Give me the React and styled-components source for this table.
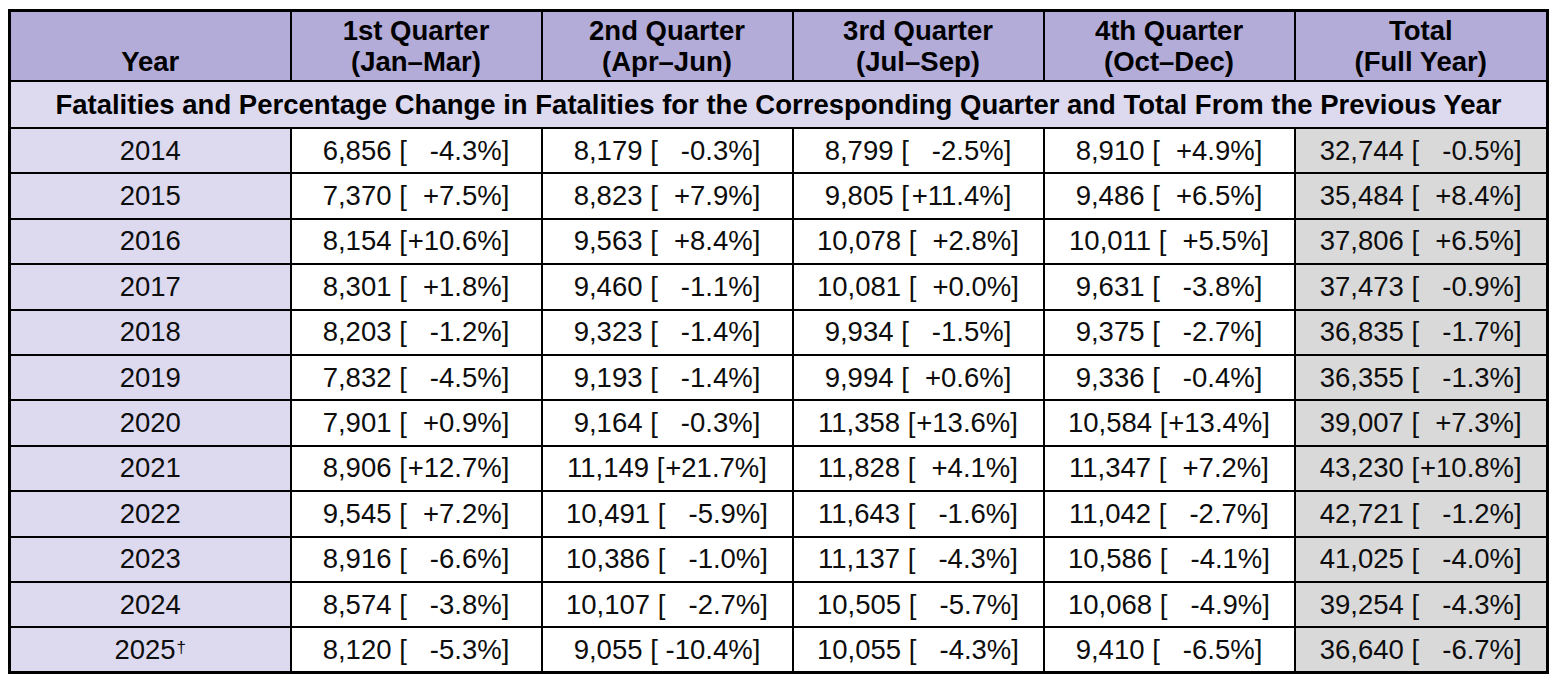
import React from 'react';
import styled, { createGlobalStyle } from 'styled-components';

const Global = createGlobalStyle`
  html, body { margin: 0; padding: 0; background: #fff; }
  body { font-family: "Liberation Sans", Arial, sans-serif; color: #000; }
`;

const Page = styled.div`
  width: 1556px;
  height: 682px;
  box-sizing: border-box;
  padding: 0 0 0 8px;
  overflow: hidden;
  font-family: "Liberation Sans", Arial, sans-serif;
`;

const Caption = styled.div`
  height: 9px;
  overflow: hidden;
  padding-left: 108px;
  font-size: 27.5px;
  font-weight: 700;
  line-height: 30px;
  color: #333;
  & > span {
    display: block;
    margin-top: -30.5px;
  }
`;

const Table = styled.table`
  border-collapse: collapse;
  table-layout: fixed;
  width: 1540px;
  border: 3px solid #000;
  font-family: "Liberation Sans", Arial, sans-serif;
`;

const Col = styled.col`
  width: ${(p) => p.$w}px;
`;

const Th = styled.th`
  font-family: "Liberation Sans", Arial, sans-serif;
  background: #b3acd9;
  border: 2px solid #000;
  font-size: 27.5px;
  font-weight: 700;
  line-height: 31px;
  vertical-align: bottom;
  text-align: center;
  padding: 3px 0 3px;
  height: 64px;
  box-sizing: border-box;
  white-space: nowrap;
`;

const SubHead = styled.td`
  font-family: "Liberation Sans", Arial, sans-serif;
  background: #dddaf0;
  border: 2px solid #000;
  font-size: 27.5px;
  font-weight: 700;
  text-align: center;
  height: 45px;
  padding: 0;
  white-space: nowrap;
`;

const bg = { year: '#dddaf0', total: '#d9d9d9', plain: '#fff' };

const Td = styled.td`
  font-family: "Liberation Sans", Arial, sans-serif;
  background: ${(p) => bg[p.$kind || 'plain']};
  border: 2px solid #000;
  font-size: 27.5px;
  text-align: center;
  height: 45.4px;
  padding: 0;
  white-space: nowrap;
  color: #0d0d0d;
  line-height: 30px;
  box-sizing: border-box;
`;

const Pct = styled.span`
  display: inline-block;
  min-width: 3.45em;
  text-align: right;
`;

const Dagger = styled.sup`
  font-size: 0.62em;
  vertical-align: top;
  position: relative;
  top: -2px;
  margin-left: 1px;
`;

const heads = [
  ['1st Quarter', '(Jan–Mar)'],
  ['2nd Quarter', '(Apr–Jun)'],
  ['3rd Quarter', '(Jul–Sep)'],
  ['4th Quarter', '(Oct–Dec)'],
  ['Total', '(Full Year)'],
];

const rows = [
  ['2014', '6,856', '-4.3%', '8,179', '-0.3%', '8,799', '-2.5%', '8,910', '+4.9%', '32,744', '-0.5%'],
  ['2015', '7,370', '+7.5%', '8,823', '+7.9%', '9,805', '+11.4%', '9,486', '+6.5%', '35,484', '+8.4%'],
  ['2016', '8,154', '+10.6%', '9,563', '+8.4%', '10,078', '+2.8%', '10,011', '+5.5%', '37,806', '+6.5%'],
  ['2017', '8,301', '+1.8%', '9,460', '-1.1%', '10,081', '+0.0%', '9,631', '-3.8%', '37,473', '-0.9%'],
  ['2018', '8,203', '-1.2%', '9,323', '-1.4%', '9,934', '-1.5%', '9,375', '-2.7%', '36,835', '-1.7%'],
  ['2019', '7,832', '-4.5%', '9,193', '-1.4%', '9,994', '+0.6%', '9,336', '-0.4%', '36,355', '-1.3%'],
  ['2020', '7,901', '+0.9%', '9,164', '-0.3%', '11,358', '+13.6%', '10,584', '+13.4%', '39,007', '+7.3%'],
  ['2021', '8,906', '+12.7%', '11,149', '+21.7%', '11,828', '+4.1%', '11,347', '+7.2%', '43,230', '+10.8%'],
  ['2022', '9,545', '+7.2%', '10,491', '-5.9%', '11,643', '-1.6%', '11,042', '-2.7%', '42,721', '-1.2%'],
  ['2023', '8,916', '-6.6%', '10,386', '-1.0%', '11,137', '-4.3%', '10,586', '-4.1%', '41,025', '-4.0%'],
  ['2024', '8,574', '-3.8%', '10,107', '-2.7%', '10,505', '-5.7%', '10,068', '-4.9%', '39,254', '-4.3%'],
  ['2025', '8,120', '-5.3%', '9,055', '-10.4%', '10,055', '-4.3%', '9,410', '-6.5%', '36,640', '-6.7%', true],
];

function Value({ n, p }) {
  return (
    <>
      {n} [<Pct>{p}</Pct>]
    </>
  );
}

export default function App() {
  return (
    <>
      <Global />
      <Page>
        <Caption>
          <span>Percentage</span>
        </Caption>
        <Table>
          <colgroup>
            <Col $w={281} />
            <Col $w={251} />
            <Col $w={251} />
            <Col $w={251} />
            <Col $w={251} />
            <Col $w={253} />
          </colgroup>
          <thead>
            <tr>
              <Th>Year</Th>
              {heads.map(([a, b]) => (
                <Th key={a}>
                  {a}
                  <br />
                  {b}
                </Th>
              ))}
            </tr>
          </thead>
          <tbody>
            <tr>
              <SubHead colSpan={6}>
                Fatalities and Percentage Change in Fatalities for the Corresponding Quarter and Total From the Previous Year
              </SubHead>
            </tr>
            {rows.map((r) => (
              <tr key={r[0]}>
                <Td $kind="year">
                  {r[0]}
                  {r[11] && <Dagger>†</Dagger>}
                </Td>
                {[1, 3, 5, 7].map((i) => (
                  <Td key={i}>
                    <Value n={r[i]} p={r[i + 1]} />
                  </Td>
                ))}
                <Td $kind="total">
                  <Value n={r[9]} p={r[10]} />
                </Td>
              </tr>
            ))}
          </tbody>
        </Table>
      </Page>
    </>
  );
}
